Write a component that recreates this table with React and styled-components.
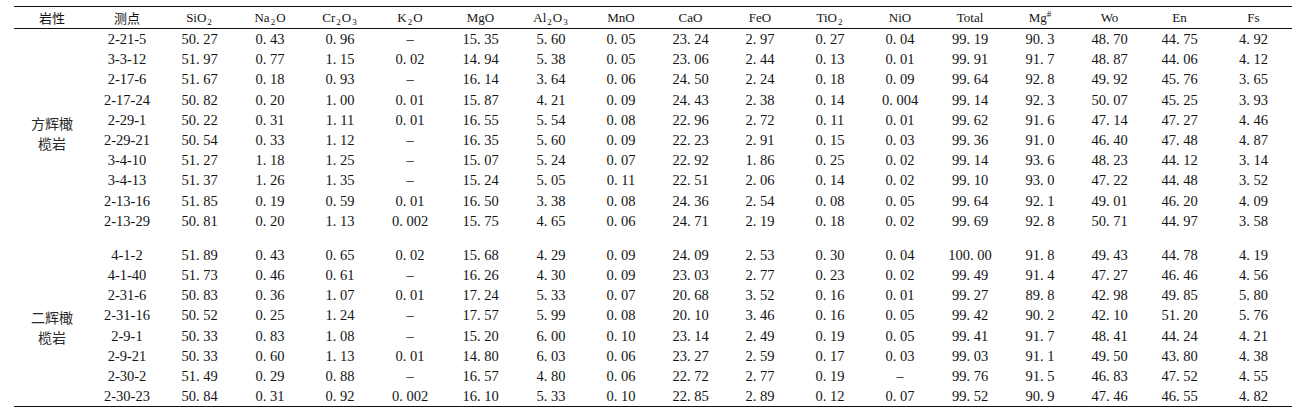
import React from "react";
import styled, { createGlobalStyle } from "styled-components";

const GlobalStyle = createGlobalStyle`
  body {
    margin: 0;
    background: #ffffff;
  }
`;

const COLS = "76px 74px 71px 70px 70px 70px 71px 70px 70px 69px 70px 70px 70px 70px 70px 69px 71px 77px";

const Table = styled.div`
  display: grid;
  grid-template-columns: ${COLS};
  width: 1278px;
  margin: 6px 0 0 14px;
  border-top: 1.5px solid #111;
  border-bottom: 1.5px solid #111;
  font-family: "Liberation Serif", "Times New Roman", "Noto Sans CJK SC", serif;
  color: #141414;
`;

const HeadCell = styled.div`
  height: 21px;
  line-height: 21px;
  border-bottom: 1px solid #111;
  text-align: center;
  font-size: 13px;
  font-family: ${(p) =>
    p.$cjk
      ? '"Noto Sans CJK SC", sans-serif'
      : '"Liberation Serif", "Times New Roman", serif'};
  white-space: nowrap;

  sub {
    font-size: 9px;
    vertical-align: -3px;
    line-height: 0;
    margin: 0 1px;
  }
  sup {
    font-size: 9px;
    vertical-align: 5px;
    line-height: 0;
  }
`;

const Cell = styled.div`
  height: 20.2px;
  line-height: 20.2px;
  text-align: center;
  font-size: 14.5px;
  white-space: nowrap;
`;

const GroupLabel = styled.div`
  grid-column: 1;
  grid-row: span ${(p) => p.$rows};
  display: flex;
  align-items: center;
  justify-content: center;
  padding-top: ${(p) => p.$shift || 0}px;
  font-family: "Noto Sans CJK SC", sans-serif;
  font-size: 14px;
  line-height: 20px;
  text-align: center;
  color: #2a2a2a;
`;

const Spacer = styled.div`
  grid-column: 1 / -1;
  height: 13.9px;
`;

const headers = [
  { key: "rock", label: "岩性", cjk: true },
  { key: "pt", label: "测点", cjk: true },
  { key: "si", label: <>SiO<sub>2</sub></> },
  { key: "na", label: <>Na<sub>2</sub>O</> },
  { key: "cr", label: <>Cr<sub>2</sub>O<sub>3</sub></> },
  { key: "k", label: <>K<sub>2</sub>O</> },
  { key: "mg", label: "MgO" },
  { key: "al", label: <>Al<sub>2</sub>O<sub>3</sub></> },
  { key: "mn", label: "MnO" },
  { key: "ca", label: "CaO" },
  { key: "fe", label: "FeO" },
  { key: "ti", label: <>TiO<sub>2</sub></> },
  { key: "ni", label: "NiO" },
  { key: "tot", label: "Total" },
  { key: "mgn", label: <>Mg<sup>#</sup></> },
  { key: "wo", label: "Wo" },
  { key: "en", label: "En" },
  { key: "fs", label: "Fs" },
];

const groups = [
  {
    name: ["方辉橄", "榄岩"],
    shift: 6,
    rows: [
      ["2-21-5", "50.27", "0.43", "0.96", "–", "15.35", "5.60", "0.05", "23.24", "2.97", "0.27", "0.04", "99.19", "90.3", "48.70", "44.75", "4.92"],
      ["3-3-12", "51.97", "0.77", "1.15", "0.02", "14.94", "5.38", "0.05", "23.06", "2.44", "0.13", "0.01", "99.91", "91.7", "48.87", "44.06", "4.12"],
      ["2-17-6", "51.67", "0.18", "0.93", "–", "16.14", "3.64", "0.06", "24.50", "2.24", "0.18", "0.09", "99.64", "92.8", "49.92", "45.76", "3.65"],
      ["2-17-24", "50.82", "0.20", "1.00", "0.01", "15.87", "4.21", "0.09", "24.43", "2.38", "0.14", "0.004", "99.14", "92.3", "50.07", "45.25", "3.93"],
      ["2-29-1", "50.22", "0.31", "1.11", "0.01", "16.55", "5.54", "0.08", "22.96", "2.72", "0.11", "0.01", "99.62", "91.6", "47.14", "47.27", "4.46"],
      ["2-29-21", "50.54", "0.33", "1.12", "–", "16.35", "5.60", "0.09", "22.23", "2.91", "0.15", "0.03", "99.36", "91.0", "46.40", "47.48", "4.87"],
      ["3-4-10", "51.27", "1.18", "1.25", "–", "15.07", "5.24", "0.07", "22.92", "1.86", "0.25", "0.02", "99.14", "93.6", "48.23", "44.12", "3.14"],
      ["3-4-13", "51.37", "1.26", "1.35", "–", "15.24", "5.05", "0.11", "22.51", "2.06", "0.14", "0.02", "99.10", "93.0", "47.22", "44.48", "3.52"],
      ["2-13-16", "51.85", "0.19", "0.59", "0.01", "16.50", "3.38", "0.08", "24.36", "2.54", "0.08", "0.05", "99.64", "92.1", "49.01", "46.20", "4.09"],
      ["2-13-29", "50.81", "0.20", "1.13", "0.002", "15.75", "4.65", "0.06", "24.71", "2.19", "0.18", "0.02", "99.69", "92.8", "50.71", "44.97", "3.58"],
    ],
  },
  {
    name: ["二辉橄", "榄岩"],
    shift: 2,
    rows: [
      ["4-1-2", "51.89", "0.43", "0.65", "0.02", "15.68", "4.29", "0.09", "24.09", "2.53", "0.30", "0.04", "100.00", "91.8", "49.43", "44.78", "4.19"],
      ["4-1-40", "51.73", "0.46", "0.61", "–", "16.26", "4.30", "0.09", "23.03", "2.77", "0.23", "0.02", "99.49", "91.4", "47.27", "46.46", "4.56"],
      ["2-31-6", "50.83", "0.36", "1.07", "0.01", "17.24", "5.33", "0.07", "20.68", "3.52", "0.16", "0.01", "99.27", "89.8", "42.98", "49.85", "5.80"],
      ["2-31-16", "50.52", "0.25", "1.24", "–", "17.57", "5.99", "0.08", "20.10", "3.46", "0.16", "0.05", "99.42", "90.2", "42.10", "51.20", "5.76"],
      ["2-9-1", "50.33", "0.83", "1.08", "–", "15.20", "6.00", "0.10", "23.14", "2.49", "0.19", "0.05", "99.41", "91.7", "48.41", "44.24", "4.21"],
      ["2-9-21", "50.33", "0.60", "1.13", "0.01", "14.80", "6.03", "0.06", "23.27", "2.59", "0.17", "0.03", "99.03", "91.1", "49.50", "43.80", "4.38"],
      ["2-30-2", "51.49", "0.29", "0.88", "–", "16.57", "4.80", "0.06", "22.72", "2.77", "0.19", "–", "99.76", "91.5", "46.83", "47.52", "4.55"],
      ["2-30-23", "50.84", "0.31", "0.92", "0.002", "16.10", "5.33", "0.10", "22.85", "2.89", "0.12", "0.07", "99.52", "90.9", "47.46", "46.55", "4.82"],
    ],
  },
];

// journal style: a small gap after the decimal point
const fmt = (v) => (v.includes(".") ? v.replace(".", ". ") : v);

const App = () => {
  return (
    <>
      <GlobalStyle />
      <Table>
        {headers.map((h) => (
          <HeadCell key={h.key} $cjk={h.cjk}>
            {h.label}
          </HeadCell>
        ))}
        {groups.map((g, gi) => (
          <React.Fragment key={gi}>
            {gi > 0 && <Spacer />}
            <GroupLabel $rows={g.rows.length} $shift={g.shift}>
              {g.name[0]}
              <br />
              {g.name[1]}
            </GroupLabel>
            {g.rows.map((r) =>
              r.map((v, i) => <Cell key={r[0] + i}>{i === 0 ? v : fmt(v)}</Cell>)
            )}
          </React.Fragment>
        ))}
      </Table>
    </>
  );
};

export default App;
